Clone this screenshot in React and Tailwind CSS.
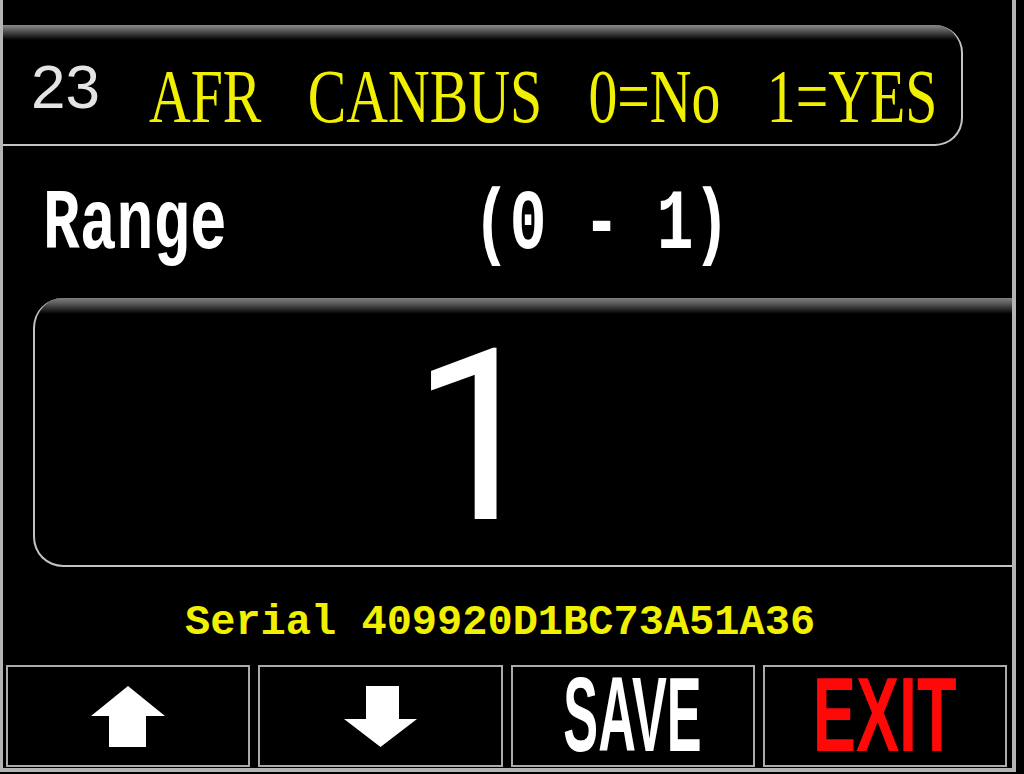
import React from "react";

const SANS = "font-['Liberation_Sans','Arimo',sans-serif]";
const MONO = "font-['Liberation_Mono','Courier_New',monospace]";

function ArrowUp() {
  return (
    <svg width="74" height="61" viewBox="0 0 74 61" aria-hidden="true">
      <polygon points="37,0 74,30 55,30 55,61 18,61 18,30 0,30" fill="#ffffff" />
    </svg>
  );
}

function ArrowDown() {
  return (
    <svg width="73" height="61" viewBox="0 0 73 61" aria-hidden="true">
      <polygon points="22,0 55,0 55,33 73,33 36.5,61 0,33 22,33" fill="#ffffff" />
    </svg>
  );
}

function KeyButton({ children }) {
  return (
    <div className="flex items-center justify-center border-2 border-[#ababab] bg-black">
      {children}
    </div>
  );
}

export default function App() {
  return (
    <div className="h-[774px] w-[1024px] overflow-hidden bg-black">
      <div className="flex h-[772px] w-[1016px] flex-col border-b-4 border-l-[3px] border-r-4 border-[#b4b4b4]">
        {/* parameter title */}
        <div className="mt-[25px] mr-[49px] flex h-[121px] shrink-0 items-start rounded-r-[28px] border-r-2 border-b-2 border-[#c4c4c4] bg-[linear-gradient(to_bottom,#8a8a8a_0px,#676767_4px,#000000_15px)] pl-[28px] pt-[31px]">
          <span className={`${SANS} text-[62px] leading-none text-[#e4e4e4]`}>23</span>
          <span className="ml-[49px] mt-[2px] origin-left scale-x-[0.76] whitespace-nowrap font-['Liberation_Serif','Times_New_Roman',serif] text-[76px] leading-none text-[#f0f000] [word-spacing:42px]">
            AFR CANBUS 0=No 1=YES
          </span>
        </div>

        {/* allowed range */}
        <div className="mt-[37px] flex h-[85px] shrink-0 pl-[40px]">
          <div className="w-[430px]">
            <span className={`${MONO} block origin-left scale-x-[0.72] text-[85px] font-bold leading-none text-white`}>Range</span>
          </div>
          <span className={`${MONO} block origin-left scale-x-[0.72] whitespace-pre text-[85px] font-bold leading-none text-white`}>(0 - 1)</span>
        </div>

        {/* current value */}
        <div className="mt-[30px] ml-[30px] h-[269px] shrink-0 rounded-l-[30px] border-b-2 border-l-2 border-[#c2c2c2] bg-[linear-gradient(to_bottom,#7e7e7e_0px,#5e5e5e_5px,#000000_16px)] pl-[376px] pt-[19px]">
          <span className="block font-['Roboto','Noto_Sans',sans-serif] text-[240px] leading-none text-white">1</span>
        </div>

        <div className={`${MONO} mt-[35px] h-[42px] shrink-0 whitespace-pre pl-[182px] text-[42px] font-bold leading-none text-[#f0f000]`}>
          Serial 409920D1BC73A51A36
        </div>

        {/* soft keys */}
        <div className="mt-[21px] ml-[3px] mr-[5px] grid h-[102px] shrink-0 grid-cols-4 gap-[8px]">
          <KeyButton>
            <ArrowUp />
          </KeyButton>
          <KeyButton>
            <ArrowDown />
          </KeyButton>
          <KeyButton>
            <span className={`${SANS} scale-x-[0.87] scale-y-[1.75] text-[60px] font-bold leading-none text-white`}>SAVE</span>
          </KeyButton>
          <KeyButton>
            <span className={`${SANS} scale-x-[1.08] scale-y-[1.75] text-[60px] font-bold leading-none text-[#ff0808]`}>EXIT</span>
          </KeyButton>
        </div>
      </div>
    </div>
  );
}
